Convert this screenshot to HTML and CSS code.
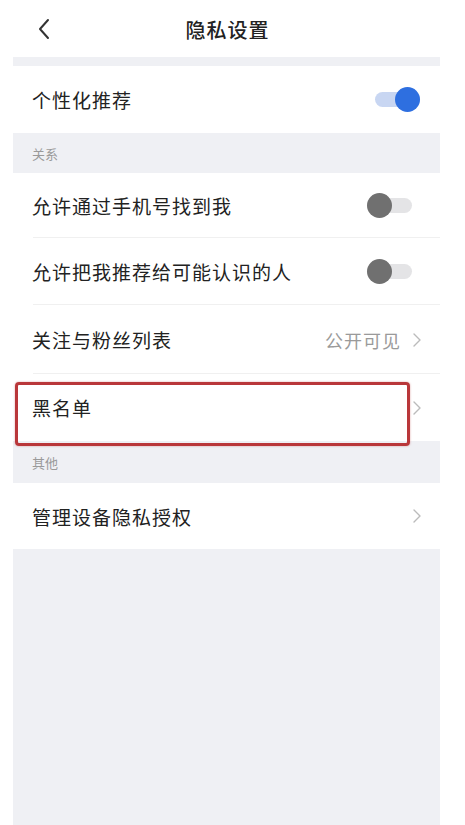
FILE: index.html
```html
<!DOCTYPE html>
<html lang="zh-CN">
<head>
    <meta charset="UTF-8">
    <meta name="viewport" content="width=device-width, initial-scale=1.0">
    <title>隐私设置</title>
    <link rel="stylesheet" href="styles.css">
</head>
<body>
    <div class="page">
        <!-- 顶部导航 -->
        <div class="nav">
            <svg class="back" width="14" height="22" viewBox="0 0 14 22">
                <polyline points="11,2 3,11 11,20" fill="none" stroke="#333" stroke-width="2" stroke-linecap="round" stroke-linejoin="round"/>
            </svg>
            <span class="nav-title">隐私设置</span>
        </div>

        <div class="strip"></div>

        <div class="row row-first">
            <span class="label">个性化推荐</span>
            <span class="switch on"><span class="knob"></span></span>
        </div>

        <div class="group-title group-first">关系</div>

        <div class="row row-a line">
            <span class="label">允许通过手机号找到我</span>
            <span class="switch"><span class="knob"></span></span>
        </div>

        <div class="row row-b line">
            <span class="label">允许把我推荐给可能认识的人</span>
            <span class="switch"><span class="knob"></span></span>
        </div>

        <div class="row row-c line">
            <span class="label">关注与粉丝列表</span>
            <span class="extra">公开可见</span>
            <svg class="arrow" width="10" height="16" viewBox="0 0 10 16">
                <polyline points="2,2 8,8 2,14" fill="none" stroke="#bbb" stroke-width="1.4" stroke-linecap="round" stroke-linejoin="round"/>
            </svg>
        </div>

        <div class="row row-d">
            <span class="label">黑名单</span>
            <svg class="arrow" width="10" height="16" viewBox="0 0 10 16">
                <polyline points="2,2 8,8 2,14" fill="none" stroke="#bbb" stroke-width="1.4" stroke-linecap="round" stroke-linejoin="round"/>
            </svg>
            <!-- 标注框 -->
            <div class="mark"></div>
        </div>

        <div class="group-title group-second">其他</div>

        <div class="row row-e">
            <span class="label">管理设备隐私授权</span>
            <svg class="arrow" width="10" height="16" viewBox="0 0 10 16">
                <polyline points="2,2 8,8 2,14" fill="none" stroke="#bbb" stroke-width="1.4" stroke-linecap="round" stroke-linejoin="round"/>
            </svg>
        </div>

        <div class="bottom"></div>
    </div>
</body>
</html>
```

FILE: styles.css
```css
:root {
    --bg-gray: #eff0f4;
    --text-color: #222;
    --sub-color: #9a9a9a;
    --blue: #2e6fe0;
}

* {
    margin: 0;
    padding: 0;
    box-sizing: border-box;
}

html, body {
    height: 100%;
}

body {
    background-color: #fff;
    font-family: "Noto Sans CJK SC", "Noto Sans", sans-serif;
    color: var(--text-color);
}

.page {
    margin: 0 25px 0 13px;
    min-height: 100%;
    display: flex;
    flex-direction: column;
    background-color: #fff;
}

/* 顶部导航 */
.nav {
    height: 57px;
    position: relative;
    display: flex;
    align-items: center;
    justify-content: center;
}

.back {
    position: absolute;
    left: 24px;
    top: 18px;
}

.nav-title {
    font-size: 20px;
    font-weight: 500;
    letter-spacing: 1px;
    margin-left: 2px;
    margin-top: 2px;
}

.strip {
    height: 9px;
    background-color: var(--bg-gray);
}

/* 列表行 */
.row {
    position: relative;
    display: flex;
    align-items: center;
    padding: 0 22px 0 19px;
    background-color: #fff;
}

.row-first { height: 67px; }
.row-a { height: 65px; }
.row-b { height: 67px; }
.row-c { height: 69px; }
.row-d { height: 67px; }
.row-e { height: 66px; }

.line::after {
    content: "";
    position: absolute;
    left: 20px;
    right: 0;
    bottom: 0;
    height: 1px;
    background-color: #f0f0f0;
}

.label {
    flex: 1;
    font-size: 19px;
    letter-spacing: 1px;
}

.extra {
    font-size: 18px;
    color: var(--sub-color);
    letter-spacing: 1px;
    margin-right: 11px;
}

.arrow {
    margin-right: -4px;
}

.group-title {
    background-color: var(--bg-gray);
    color: var(--sub-color);
    font-size: 13px;
    padding-left: 19px;
    display: flex;
    align-items: center;
}

.group-first { height: 40px; }
.group-second { height: 42px; }

.bottom {
    flex: 1;
    background-color: var(--bg-gray);
}

/* 开关 */
.switch {
    position: relative;
    width: 45px;
    height: 15px;
    border-radius: 8px;
    background-color: #e4e4e6;
    margin-right: 6px;
}

.switch .knob {
    position: absolute;
    left: 0;
    top: -5px;
    width: 25px;
    height: 25px;
    border-radius: 50%;
    background-color: #707070;
}

.switch.on {
    background-color: #c8d6f2;
    margin-right: -2px;
}

.switch.on .knob {
    left: auto;
    right: 0;
    background-color: var(--blue);
}

/* 红色标注框 */
.mark {
    position: absolute;
    left: 2px;
    right: 30px;
    top: 8px;
    bottom: -5px;
    border: 3px solid #b9373a;
    border-radius: 4px;
    box-shadow: 0 0 2px rgba(185, 55, 58, 0.5);
}
```
